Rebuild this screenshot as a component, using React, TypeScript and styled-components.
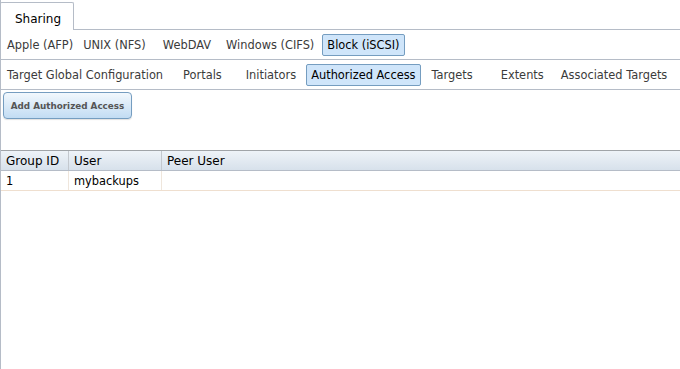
import React from "react";
import styled, { createGlobalStyle } from "styled-components";

const Global = createGlobalStyle`
  html, body { margin: 0; padding: 0; background: #fff; }
  body { font-family: "DejaVu Sans", Verdana, sans-serif; font-size: 11.4px; color: #131313; }
`;

const Page = styled.div`
  width: 680px;
  height: 369px;
  border-left: 1px solid #b5bcc7;
  box-sizing: border-box;
  overflow: hidden;
  display: flex;
  flex-direction: column;
`;

const TopStrip = styled.div`
  display: flex;
  height: 30px;
  padding-top: 2px;
  box-sizing: border-box;
  border-bottom: 1px solid #b5bcc7;
  margin-left: -1px;
`;

const MainTab = styled.div`
  width: 74px;
  box-sizing: border-box;
  border: 1px solid #b5bcc7;
  border-bottom: none;
  border-radius: 2px 2px 0 0;
  background: #fff;
  margin-bottom: -1px;
  padding: 9px 0 0 14px;
  font-size: 12px;
  color: #000;
`;

const Bar = styled.div`
  display: flex;
  align-items: center;
  height: 30px;
  box-sizing: border-box;
  border-bottom: 1px solid #b5bcc7;
`;

const Tab = styled.div<{ $active?: boolean; $ml: number }>`
  margin-left: ${(p) => p.$ml}px;
  height: 22px;
  display: flex;
  align-items: center;
  padding: 0 4px;
  box-sizing: border-box;
  border: 1px solid ${(p) => (p.$active ? "#759dc0" : "transparent")};
  border-radius: 2px;
  background: ${(p) => (p.$active ? "#cfe5fa" : "transparent")};
  color: ${(p) => (p.$active ? "#000" : "#3b3b3b")};
  white-space: nowrap;
`;

const Toolbar = styled.div`
  padding: 2px 0 0 2px;
  height: 60px;
  box-sizing: border-box;
`;

const AddButton = styled.button`
  width: 129px;
  height: 27px;
  border: 1px solid #759dc0;
  border-radius: 4px;
  background: linear-gradient(#f2f8fd, #c2dcf3);
  box-shadow: 0 1px 1px rgba(0,0,0,0.12);
  font-family: "DejaVu Sans", Verdana, sans-serif;
  font-weight: bold;
  font-size: 8.8px;
  color: #555;
  padding: 0;
`;

const Table = styled.div`
  display: flex;
  flex-direction: column;
`;

const HeadRow = styled.div`
  display: grid;
  grid-template-columns: 68px 93px 1fr;
  height: 21px;
  box-sizing: border-box;
  border-top: 1px solid #a0a4a8;
  border-bottom: 1px solid #b5bcc7;
  background: linear-gradient(#eef3f8, #d7e1eb);
`;

const HeadCell = styled.div<{ $last?: boolean }>`
  display: flex;
  align-items: center;
  padding-left: 5px;
  border-right: ${(p) => (p.$last ? "none" : "1px solid #c3c8ce")};
  font-size: 12px;
  color: #000;
`;

const BodyRow = styled.div`
  display: grid;
  grid-template-columns: 68px 93px 1fr;
  height: 20px;
  box-sizing: border-box;
  border-bottom: 1px solid #efdfcf;
`;

const BodyCell = styled.div<{ $last?: boolean }>`
  display: flex;
  align-items: center;
  padding-left: 5px;
  border-right: ${(p) => (p.$last ? "none" : "1px solid #efe6dc")};
  color: #000;
`;

const shareTabs = [
  { label: "Apple (AFP)", ml: 1 },
  { label: "UNIX (NFS)", ml: 0 },
  { label: "WebDAV", ml: 7 },
  { label: "Windows (CIFS)", ml: 5 },
  { label: "Block (iSCSI)", ml: 3, active: true },
];

const iscsiTabs = [
  { label: "Target Global Configuration", ml: 1 },
  { label: "Portals", ml: 10 },
  { label: "Initiators", ml: 14 },
  { label: "Authorized Access", ml: 5, active: true },
  { label: "Targets", ml: 6 },
  { label: "Extents", ml: 18 },
  { label: "Associated Targets", ml: 7 },
];

export default function App() {
  return (
    <>
      <Global />
      <Page>
        <TopStrip>
          <MainTab>Sharing</MainTab>
        </TopStrip>
        <Bar>
          {shareTabs.map((t) => (
            <Tab key={t.label} $ml={t.ml} $active={t.active}>
              {t.label}
            </Tab>
          ))}
        </Bar>
        <Bar>
          {iscsiTabs.map((t) => (
            <Tab key={t.label} $ml={t.ml} $active={t.active}>
              {t.label}
            </Tab>
          ))}
        </Bar>
        <Toolbar>
          <AddButton>Add Authorized Access</AddButton>
        </Toolbar>
        <Table>
          <HeadRow>
            <HeadCell>Group ID</HeadCell>
            <HeadCell>User</HeadCell>
            <HeadCell $last>Peer User</HeadCell>
          </HeadRow>
          <BodyRow>
            <BodyCell>1</BodyCell>
            <BodyCell>mybackups</BodyCell>
            <BodyCell $last></BodyCell>
          </BodyRow>
        </Table>
      </Page>
    </>
  );
}
